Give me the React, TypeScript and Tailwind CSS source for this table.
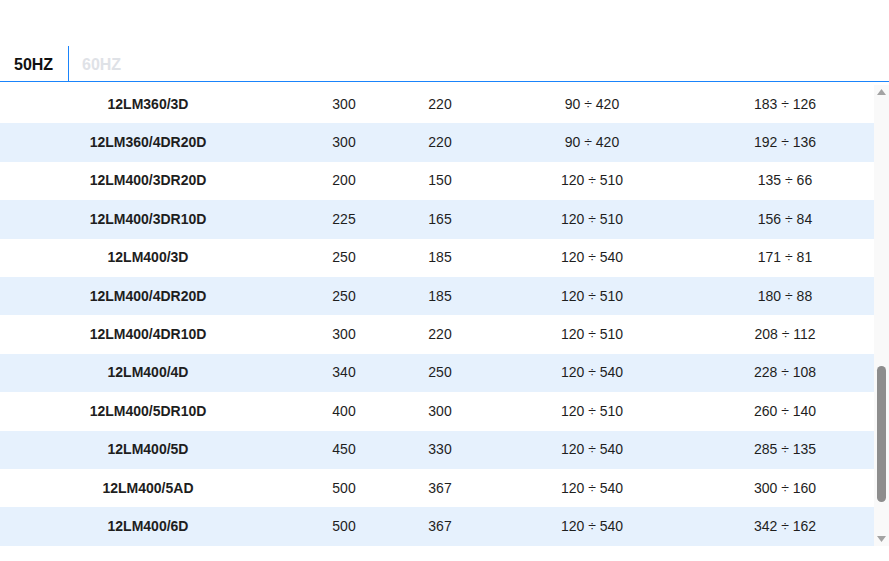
const rows = [
  ["12LM360/3D", "300", "220", "90 ÷ 420", "183 ÷ 126"],
  ["12LM360/4DR20D", "300", "220", "90 ÷ 420", "192 ÷ 136"],
  ["12LM400/3DR20D", "200", "150", "120 ÷ 510", "135 ÷ 66"],
  ["12LM400/3DR10D", "225", "165", "120 ÷ 510", "156 ÷ 84"],
  ["12LM400/3D", "250", "185", "120 ÷ 540", "171 ÷ 81"],
  ["12LM400/4DR20D", "250", "185", "120 ÷ 510", "180 ÷ 88"],
  ["12LM400/4DR10D", "300", "220", "120 ÷ 510", "208 ÷ 112"],
  ["12LM400/4D", "340", "250", "120 ÷ 540", "228 ÷ 108"],
  ["12LM400/5DR10D", "400", "300", "120 ÷ 510", "260 ÷ 140"],
  ["12LM400/5D", "450", "330", "120 ÷ 540", "285 ÷ 135"],
  ["12LM400/5AD", "500", "367", "120 ÷ 540", "300 ÷ 160"],
  ["12LM400/6D", "500", "367", "120 ÷ 540", "342 ÷ 162"],
];

export default function App() {
  return (
    <div className="w-[889px] h-[561px] bg-white pt-[46px] font-['Liberation_Sans',Arial,sans-serif] text-[#1e1e1e] overflow-hidden">
      {/* Tabs */}
      <div className="flex h-[35px]">
        <div className="w-[68px] pl-[14px] pt-[7px] text-[16px] font-bold text-[#111]">
          50HZ
        </div>
        <div className="w-[1px] bg-[#1a84fb]" />
        <div className="pl-[13px] pt-[7px] text-[16px] font-bold text-[#dfe2e7]">
          60HZ
        </div>
      </div>
      <div className="h-[1px] bg-[#1a84fb]" />

      {/* Table + scrollbar */}
      <div className="flex mt-[3px] h-[461px]">
        <div className="w-[874px] flex flex-col">
          {rows.map((r, i) => (
            <div
              key={r[0]}
              className={`flex items-center h-[38.4px] text-[14px] shrink-0 ${
                i % 2 === 1 ? "bg-[#e6f1fd]" : "bg-white"
              }`}
            >
              <div className="w-[296px] text-center font-bold">{r[0]}</div>
              <div className="w-[96px] text-center">{r[1]}</div>
              <div className="w-[96px] text-center">{r[2]}</div>
              <div className="w-[208px] text-center">{r[3]}</div>
              <div className="w-[178px] text-center">{r[4]}</div>
            </div>
          ))}
        </div>
        <div className="w-[15px] bg-[#f9f9f9] flex flex-col items-center">
          <svg width="9" height="6" viewBox="0 0 9 6" className="mt-[4px]">
            <polygon points="4.5,0 9,6 0,6" fill="#a3a3a3" />
          </svg>
          <div className="mt-[271px] w-[9px] h-[136px] rounded-full bg-[#8d8d8d]" />
          <svg width="9" height="6" viewBox="0 0 9 6" className="mt-auto mb-[4px]">
            <polygon points="0,0 9,0 4.5,6" fill="#a3a3a3" />
          </svg>
        </div>
      </div>
    </div>
  );
}
